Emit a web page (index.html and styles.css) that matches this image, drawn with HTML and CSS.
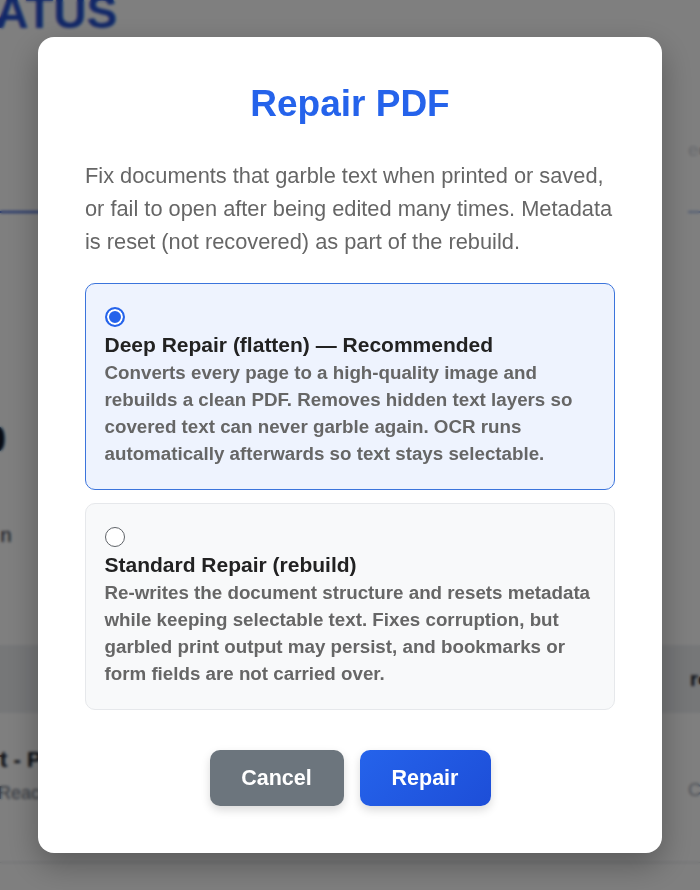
FILE: index.html
```html
<!DOCTYPE html>
<html lang="en">
<head>
<meta charset="utf-8">
<title>Repair PDF</title>
<link rel="stylesheet" href="styles.css">
</head>
<body>
<div class="page">
  <h1 class="status">STATUS</h1>
  <div class="tabs">
    <div class="tab tab-active"></div>
    <div class="tab tab-other">edit</div>
  </div>
  <div class="stat-num">0</div>
  <div class="stat-label">Action</div>
  <div class="table-head">
    <span></span>
    <span class="th-right">repair</span>
  </div>
  <div class="table-row">
    <div class="cell-main">
      <div class="doc-name">Contract - Pricing</div>
      <div class="doc-state">Reached limit</div>
    </div>
    <div class="cell-right">Completed</div>
  </div>
</div>

<div class="overlay">
  <div class="modal" role="dialog" aria-labelledby="modal-title">
    <h2 class="modal-title" id="modal-title">Repair PDF</h2>
    <p class="modal-desc">Fix documents that garble text when printed or saved, or fail to open after being edited many times. Metadata is reset (not recovered) as part of the rebuild.</p>

    <label class="option option-selected">
      <input class="radio" type="radio" name="mode" checked>
      <span class="option-title">Deep Repair (flatten) — Recommended</span>
      <span class="option-desc">Converts every page to a high-quality image and rebuilds a clean PDF. Removes hidden text layers so covered text can never garble again. OCR runs automatically afterwards so text stays selectable.</span>
    </label>

    <label class="option">
      <input class="radio" type="radio" name="mode">
      <span class="option-title">Standard Repair (rebuild)</span>
      <span class="option-desc">Re-writes the document structure and resets metadata while keeping selectable text. Fixes corruption, but garbled print output may persist, and bookmarks or form fields are not carried over.</span>
    </label>

    <div class="actions">
      <button class="btn btn-cancel" type="button">Cancel</button>
      <button class="btn btn-primary" type="button">Repair</button>
    </div>
  </div>
</div>
</body>
</html>
```

FILE: styles.css
```css
* { box-sizing: border-box; }

html, body {
  margin: 0;
  padding: 0;
  height: 100%;
  overflow: hidden;
  background: #ffffff;
  font-family: "Liberation Sans", Arial, Helvetica, sans-serif;
}

/* ---------- background page ---------- */
.page {
  width: 700px;
  overflow: hidden;
}

.status {
  margin: -11px 0 0 -60px;
  font-size: 46px;
  line-height: 46px;
  font-weight: 700;
  color: #2450d0;
  white-space: nowrap;
}

.tabs {
  display: grid;
  grid-template-columns: 300px 388px auto;
  height: 166px;
  margin-top: 12px;
}

.tab-active {
  border-bottom: 2px solid #2450d0;
}

.tab-other {
  grid-column: 3;
  padding-top: 92px;
  font-size: 18px;
  line-height: 22px;
  color: #cfd3da;
  white-space: nowrap;
  border-bottom: 2px solid #9fb6e6;
}

.stat-num {
  margin: 205px 0 0 -14px;
  font-size: 36px;
  line-height: 44px;
  font-weight: 700;
  color: #111827;
}

.stat-label {
  margin: 61px 0 0 -44px;
  font-size: 20px;
  line-height: 24px;
  color: #1f2937;
}

.table-head {
  display: grid;
  grid-template-columns: 690px auto;
  margin-top: 98px;
  height: 68px;
  align-items: center;
  background: #eceef1;
}

.th-right {
  font-size: 20px;
  font-weight: 700;
  color: #111827;
  white-space: nowrap;
}

.table-row {
  display: grid;
  grid-template-columns: 688px auto;
  padding: 33px 0 58px;
  border-bottom: 1px solid #d8dbe0;
}

.doc-name {
  margin-left: -83px;
  font-size: 22px;
  line-height: 28px;
  font-weight: 700;
  color: #111827;
  white-space: nowrap;
}

.doc-state {
  margin: 8px 0 0 -2px;
  font-size: 18px;
  line-height: 22px;
  color: #6b7280;
  white-space: nowrap;
}

.cell-right {
  padding-top: 33px;
  font-size: 18px;
  line-height: 22px;
  color: #9ca3af;
  white-space: nowrap;
}

/* ---------- overlay + modal ---------- */
.overlay {
  position: fixed;
  inset: 0;
  display: flex;
  align-items: center;
  justify-content: center;
  background: rgba(0, 0, 0, 0.5);
  backdrop-filter: blur(1.5px);
}

.modal {
  width: 624px;
  padding: 45px 47px 47px;
  background: #ffffff;
  border-radius: 16px;
  box-shadow: 0 12px 32px rgba(0, 0, 0, 0.3);
}

.modal-title {
  margin: 0 0 32.5px;
  text-align: center;
  font-size: 37px;
  line-height: 44px;
  font-weight: 700;
  color: #2563eb;
}

.modal-desc {
  margin: 0 0 25.5px;
  font-size: 21.8px;
  line-height: 33px;
  color: #666666;
}

.option {
  display: block;
  height: 207px;
  padding: 22.5px 18.5px 0;
  border: 1.5px solid #e6e8eb;
  border-radius: 10px;
  background: #f8f9fa;
  cursor: pointer;
}

.option + .option {
  margin-top: 13px;
}

.option-selected {
  border-color: #3b74dc;
  background: #eef3fe;
}

.radio {
  display: block;
  appearance: none;
  -webkit-appearance: none;
  margin: 0 0 4px;
  width: 20px;
  height: 20px;
  border: 1.5px solid #5f6368;
  border-radius: 50%;
  background: #ffffff;
}

.radio:checked {
  border: 2px solid #2563eb;
  background: #2563eb;
  box-shadow: inset 0 0 0 2px #ffffff;
}

.option-title {
  display: block;
  font-size: 21px;
  line-height: 28px;
  font-weight: 700;
  color: #222222;
}

.option-desc {
  display: block;
  font-size: 18.75px;
  line-height: 27.3px;
  font-weight: 700;
  color: #666666;
}

.actions {
  display: flex;
  justify-content: center;
  gap: 16px;
  margin-top: 40px;
}

.btn {
  height: 56px;
  padding: 0 30px;
  border: none;
  border-radius: 10px;
  font-family: inherit;
  font-size: 21.5px;
  font-weight: 700;
  color: #ffffff;
  cursor: pointer;
  box-shadow: 0 4px 10px rgba(0, 0, 0, 0.15);
}

.btn-cancel {
  width: 134px;
  background: #6c757d;
}

.btn-primary {
  width: 131px;
  background: linear-gradient(135deg, #2563eb, #1d4ed8);
}
```
